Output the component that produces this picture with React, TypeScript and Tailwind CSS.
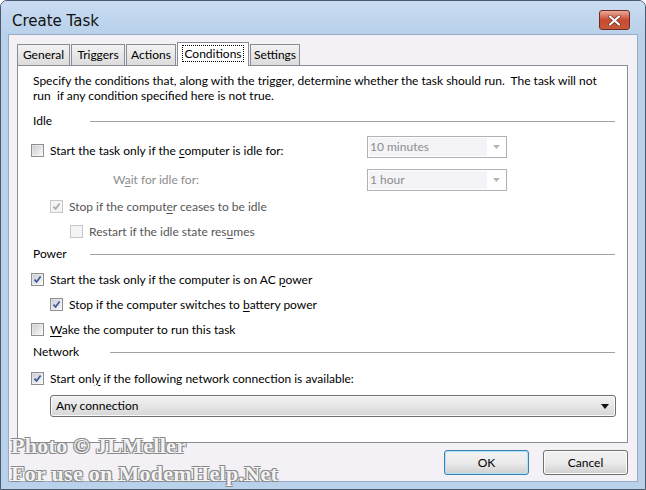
import React from "react";

const ui = "font-['Lato','Noto_Sans',sans-serif] text-[12px]";

function Check({ checked = false, disabled = false }: { checked?: boolean; disabled?: boolean }) {
  return (
    <div
      className={`w-[13px] h-[13px] shrink-0 border flex items-center justify-center ${
        disabled ? "border-[#c8c8c8] bg-[#f4f4f4]" : "border-[#8e8f8f] bg-gradient-to-br from-[#dcdcdc] to-[#fbfbfb]"
      }`}
    >
      <div
        className={`w-[9px] h-[9px] flex items-center justify-center ${
          disabled ? "bg-[#f4f4f4]" : "bg-gradient-to-br from-[#cbcfd5] to-[#f6f6f6]"
        }`}
      >
        {checked && (
          <svg width="9" height="9" viewBox="0 0 9 9">
            <path
              d="M1.5 4.6 L3.6 7 L7.6 1.6"
              fill="none"
              stroke={disabled ? "#a8a8a8" : "#3b5598"}
              strokeWidth="1.7"
            />
          </svg>
        )}
      </div>
    </div>
  );
}

function U({ children }: { children: React.ReactNode }) {
  return <span className="underline underline-offset-2">{children}</span>;
}

function Heading({ label, w }: { label: string; w: string }) {
  return (
    <div className="h-[16px] flex items-center pl-[15px] pr-[12px]">
      <div className={w}>{label}</div>
      <div className="flex-1 h-px bg-[#a0a0a0]" />
    </div>
  );
}

function Combo({ value }: { value: string }) {
  return (
    <div className="w-[140px] h-[22px] border border-[#adb2b5] bg-white flex items-center p-[1px]">
      <div className="w-[118px] h-[18px] bg-[#f4f3f7] text-[#8d8d8d] pl-[1px] leading-[18px]">{value}</div>
      <div className="flex-1 flex justify-center">
        <svg width="7" height="4" viewBox="0 0 7 4">
          <path d="M0 0 H7 L3.5 4 Z" fill="#b5b5b5" />
        </svg>
      </div>
    </div>
  );
}

function Tab({ label, w, active = false }: { label: string; w: string; active?: boolean }) {
  if (active) {
    return (
      <div
        className={`${w} h-[24px] -mb-px z-10 bg-white border border-b-0 border-[#898c95] flex items-center justify-center mr-[1px]`}
      >
        <span className="border border-dotted border-black px-[1px] leading-[15px] -mt-[3px]">{label}</span>
      </div>
    );
  }
  return (
    <div
      className={`${w} h-[21px] bg-gradient-to-b from-[#f2f2f2] to-[#dcdcdc] border border-b-0 border-[#898c95] flex items-center justify-center mr-[1px]`}
    >
      {label}
    </div>
  );
}

function Button({ label, focused = false }: { label: string; focused?: boolean }) {
  return (
    <div
      className={`w-[85px] h-[25px] rounded-[3px] border flex items-center justify-center bg-gradient-to-b from-[#f2f2f2] via-[#ebebeb] to-[#cfcfcf] ${
        focused ? "border-[#3c7fb1] shadow-[inset_0_0_0_1px_#aee2f8]" : "border-[#707070] shadow-[inset_0_0_0_1px_#fcfcfc]"
      }`}
    >
      {label}
    </div>
  );
}

export default function App() {
  return (
    <div className={`${ui} w-[646px] h-[490px] relative overflow-hidden bg-[#b9d1ea] border border-[#4a5a70] rounded-t-[7px] flex flex-col text-black`}>
      {/* title bar */}
      <div className="h-[33px] flex items-start justify-between bg-gradient-to-b from-[#c9dcf2] to-[#b9d1ea]">
        <div className="pl-[11px] pt-[9px] font-['DejaVu_Sans',sans-serif] text-[15px] text-[#111]">Create Task</div>
        <div className="mt-[9px] mr-[15px] w-[31px] h-[20px] rounded-[3px] border border-[#6e2a22] bg-gradient-to-b from-[#e9a99a] via-[#c9492f] to-[#c45a3a] flex items-center justify-center">
          <svg width="13" height="11" viewBox="0 0 13 11">
            <path d="M2 1.5 L11 9.5 M11 1.5 L2 9.5" stroke="#6b2a1f" strokeWidth="3.4" strokeLinecap="round" />
            <path d="M2 1.5 L11 9.5 M11 1.5 L2 9.5" stroke="#ffffff" strokeWidth="2.2" strokeLinecap="round" />
          </svg>
        </div>
      </div>

      {/* client area */}
      <div className="mx-[7px] mb-[7px] flex-1 bg-[#f3f1f6] border border-[#95abc6] pl-[8px] pt-[7px] pr-[9px] flex flex-col">
        <div className="flex items-end h-[23px]">
          <Tab label="General" w="w-[53px]" />
          <Tab label="Triggers" w="w-[54px]" />
          <Tab label="Actions" w="w-[50px]" />
          <Tab label="Conditions" w="w-[72px]" active />
          <Tab label="Settings" w="w-[50px]" />
        </div>

        <div className="w-[611px] h-[378px] bg-white border border-[#898c95] flex flex-col">
          <div className="pl-[15px] pt-[7px] leading-[15px] pr-[10px]">
            Specify the conditions that, along with the trigger, determine whether the task should run.&nbsp; The task will not run&nbsp; if any condition specified here is not true.
          </div>

          <div className="mt-[10px]">
            <Heading label="Idle" w="w-[57px]" />
          </div>

          <div className="mt-[7px] flex items-start pl-[13px]">
            <div className="w-[336px] pt-[8px] flex items-center gap-[6px] h-[21px]">
              <Check />
              <span>
                Start the task only if the <U>c</U>omputer is idle for:
              </span>
            </div>
            <Combo value="10  minutes" />
          </div>

          <div className="mt-[11px] flex items-center pl-[13px]">
            <div className="w-[336px] pl-[82px] text-[#8d8d8d]">
              W<U>a</U>it for idle for:
            </div>
            <Combo value="1  hour" />
          </div>

          <div className="mt-[9px] h-[13px] flex items-center gap-[6px] pl-[32px] text-[#555]">
            <Check checked disabled />
            <span>
              Stop if the comput<U>e</U>r ceases to be idle
            </span>
          </div>

          <div className="mt-[12px] h-[13px] flex items-center gap-[6px] pl-[52px] text-[#555]">
            <Check disabled />
            <span>
              Restart if the idle state res<U>u</U>mes
            </span>
          </div>

          <div className="mt-[8px]">
            <Heading label="Power" w="w-[57px]" />
          </div>

          <div className="mt-[11px] h-[13px] flex items-center gap-[6px] pl-[13px]">
            <Check checked />
            <span>
              Start the task only if the computer is on AC <U>p</U>ower
            </span>
          </div>

          <div className="mt-[12px] h-[13px] flex items-center gap-[6px] pl-[32px]">
            <Check checked />
            <span>
              Stop if the computer switches to <U>b</U>attery power
            </span>
          </div>

          <div className="mt-[12px] h-[13px] flex items-center gap-[6px] pl-[13px]">
            <Check />
            <span>
              <U>W</U>ake the computer to run this task
            </span>
          </div>

          <div className="mt-[8px]">
            <Heading label="Network" w="w-[77px]" />
          </div>

          <div className="mt-[12px] h-[13px] flex items-center gap-[6px] pl-[13px]">
            <Check checked />
            <span>
              Start onl<U>y</U> if the following network connection is available:
            </span>
          </div>

          <div className="mt-[10px] ml-[32px] w-[566px] h-[22px] rounded-[3px] border border-[#707070] bg-gradient-to-b from-[#f2f2f2] via-[#e6e6e6] to-[#d6d6d6] shadow-[inset_0_0_0_1px_#fafafa] flex items-center justify-between pl-[5px] pr-[6px]">
            <span>Any connection</span>
            <svg width="8" height="5" viewBox="0 0 8 5">
              <path d="M0 0 H8 L4 5 Z" fill="#111" />
            </svg>
          </div>
        </div>

        <div className="mt-[7px] flex justify-end gap-[14px]">
          <Button label="OK" focused />
          <Button label="Cancel" />
        </div>
      </div>

      {/* watermark overlay */}
      <div className="absolute left-[10px] top-[431px] font-['Liberation_Serif',serif] font-bold text-[22px] leading-[28px] text-white/90 tracking-[0.3px] [text-shadow:-1px_-1px_0_#8a8a8a,1px_-1px_0_#8a8a8a,-1px_1px_0_#8a8a8a,1px_1px_0_#8a8a8a]">
        <div>Photo © JLMeller</div>
        <div>For use on ModemHelp.Net</div>
      </div>
    </div>
  );
}
